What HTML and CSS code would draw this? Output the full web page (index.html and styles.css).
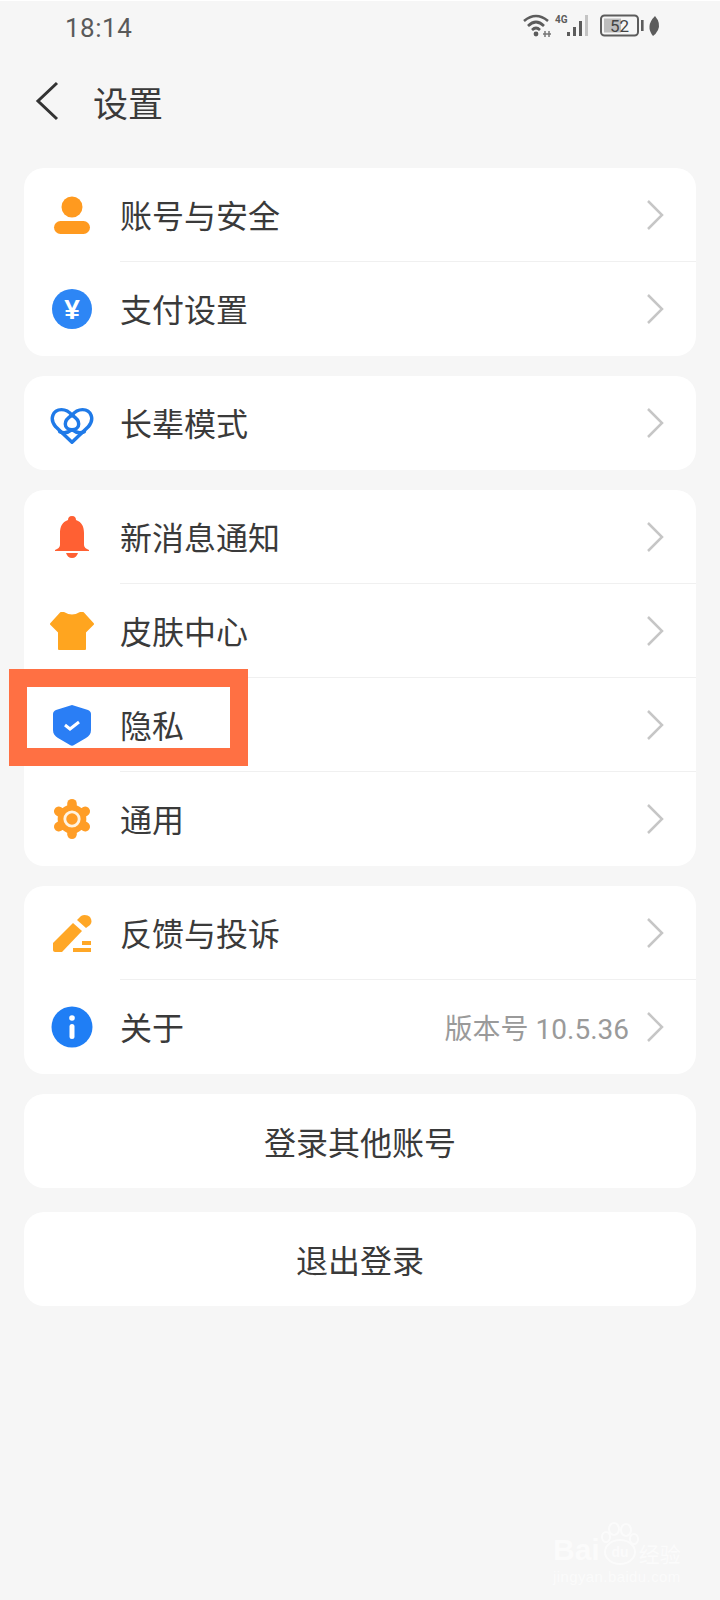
FILE: index.html
```html
<!DOCTYPE html>
<html lang="zh-CN">
  <head>
    <meta charset="UTF-8" />
    <meta name="viewport" content="width=device-width, initial-scale=1.0" />
    <title>设置</title>
    <link rel="stylesheet" href="styles.css">
  </head>
  <body>
    <!-- Status bar -->
    <div class="status-bar">
      <span class="status-time">18:14</span>
      <svg class="status-icons" width="138" height="26" viewBox="0 0 138 26">
        <g fill="none" stroke="#5c5c5c" stroke-width="2.6">
          <path d="M1 8 Q13 -2 25 8" />
          <path d="M5 13 Q13 5 21 13" />
          <path d="M9 17 Q13 13 17 17" />
        </g>
        <circle cx="13" cy="21" r="2.4" fill="#5c5c5c" />
        <path d="M20 21h8M22 18v6M26 18v6" stroke="#777" stroke-width="1.5" fill="none" />
        <text x="32" y="10" class="status-4g">4G</text>
        <rect x="44" y="19" width="3" height="4" fill="#5c5c5c" />
        <rect x="50" y="14" width="3" height="9" fill="#5c5c5c" />
        <rect x="56" y="8" width="3" height="15" fill="#5c5c5c" />
        <rect x="62" y="2" width="3" height="21" fill="#c4c4c4" />
        <rect x="78" y="2.5" width="37" height="20" rx="3.5" fill="none" stroke="#5c5c5c" stroke-width="2" />
        <rect x="81" y="5.5" width="17" height="14" fill="#bdbdbd" />
        <text x="96.5" y="19" text-anchor="middle" class="status-battery">52</text>
        <rect x="118" y="7" width="2.6" height="11" fill="#5c5c5c" />
        <path d="M132 3 Q138 10 135 17 Q133 21 130 23 Q122 13 132 3Z" fill="#5c5c5c" />
      </svg>
    </div>

    <!-- Header -->
    <div class="page-header">
      <svg class="back-icon" width="24" height="40" viewBox="0 0 24 40">
        <path d="M22 2 L3 20 L22 38" fill="none" stroke="#333" stroke-width="3" />
      </svg>
      <h1 class="page-title">设置</h1>
    </div>

    <div class="settings">
      <div class="card">
        <div class="row">
          <svg class="row-icon" width="44" height="44" viewBox="0 0 44 44">
            <circle cx="22" cy="14" r="10.5" fill="#ff9a1f" />
            <rect x="4" y="28" width="36" height="13" rx="6.5" fill="#ff9a1f" />
          </svg>
          <span class="row-label">账号与安全</span>
          <svg class="chevron" width="18" height="32" viewBox="0 0 18 32"><path d="M2 2 L16 16 L2 30" /></svg>
        </div>
        <div class="row row-split">
          <svg class="row-icon" width="44" height="44" viewBox="0 0 44 44">
            <circle cx="22" cy="22" r="20" fill="#2d86f5" />
            <text x="22" y="32" text-anchor="middle" class="yuan">¥</text>
          </svg>
          <span class="row-label">支付设置</span>
          <svg class="chevron" width="18" height="32" viewBox="0 0 18 32"><path d="M2 2 L16 16 L2 30" /></svg>
        </div>
      </div>

      <div class="card">
        <div class="row">
          <svg class="row-icon" width="44" height="44" viewBox="0 0 46 44">
            <g fill="none" stroke="#1f7ae8" stroke-width="3.6" stroke-linejoin="round" stroke-linecap="round">
              <path d="M23 42 L6 26 C-1 18 3 8 12 8 C17 8 20 10 23 14 C26 10 29 8 34 8 C43 8 47 18 40 26 Z" />
              <path d="M23 14 C28 17 30 20 30 23 C30 27 27 29 23 29 C19 29 16 27 16 23 C16 20 18 17 23 14 Z" />
              <path d="M10 31 C14 33 18 33 23 29 C28 33 32 33 36 31" />
            </g>
          </svg>
          <span class="row-label">长辈模式</span>
          <svg class="chevron" width="18" height="32" viewBox="0 0 18 32"><path d="M2 2 L16 16 L2 30" /></svg>
        </div>
      </div>

      <div class="card">
        <div class="row">
          <svg class="row-icon" width="44" height="44" viewBox="0 0 44 44">
            <path d="M22 1 C25 1 26 3 26 5 C32 7 34 12 34 18 L34 30 C34 32 36 34 39 35 L39 36 L5 36 L5 35 C8 34 10 32 10 30 L10 18 C10 12 12 7 18 5 C18 3 19 1 22 1 Z" fill="#ff6033" />
            <path d="M16 38 L28 38 C27 41 25 43 22 43 C19 43 17 41 16 38 Z" fill="#ff6033" />
          </svg>
          <span class="row-label">新消息通知</span>
          <svg class="chevron" width="18" height="32" viewBox="0 0 18 32"><path d="M2 2 L16 16 L2 30" /></svg>
        </div>
        <div class="row row-split">
          <svg class="row-icon" width="44" height="44" viewBox="0 0 44 44">
            <path d="M14 4 Q22 9 30 4 L33 4 L43 15 L35 23 L35 40 L9 40 L9 23 L1 15 L11 4 Z" fill="#ffa51f" stroke="#ffa51f" stroke-width="2" stroke-linejoin="round" />
          </svg>
          <span class="row-label">皮肤中心</span>
          <svg class="chevron" width="18" height="32" viewBox="0 0 18 32"><path d="M2 2 L16 16 L2 30" /></svg>
        </div>
        <div class="row row-split">
          <svg class="row-icon" width="44" height="44" viewBox="0 0 44 44">
            <path d="M22 2 L38 7 C40 8 41 9 41 11 L41 27 C41 31 39 33 36 35 L24 42 C23 43 21 43 20 42 L8 35 C5 33 3 31 3 27 L3 11 C3 9 4 8 6 7 Z" fill="#2a7ef5" />
            <path d="M15 22 L20 26 L29 19" fill="none" stroke="#fff" stroke-width="3" />
          </svg>
          <span class="row-label">隐私</span>
          <svg class="chevron" width="18" height="32" viewBox="0 0 18 32"><path d="M2 2 L16 16 L2 30" /></svg>
        </div>
        <div class="row row-split">
          <svg class="row-icon" width="44" height="44" viewBox="0 0 44 46">
            <g fill="#ff9d26">
              <circle cx="22" cy="23" r="15" />
              <rect x="17" y="2" width="10" height="42" rx="5" />
              <rect x="17" y="2" width="10" height="42" rx="5" transform="rotate(60 22 23)" />
              <rect x="17" y="2" width="10" height="42" rx="5" transform="rotate(120 22 23)" />
            </g>
            <circle cx="22" cy="23" r="7.5" fill="none" stroke="#fff3e0" stroke-width="3" />
          </svg>
          <span class="row-label">通用</span>
          <svg class="chevron" width="18" height="32" viewBox="0 0 18 32"><path d="M2 2 L16 16 L2 30" /></svg>
        </div>
      </div>

      <div class="card">
        <div class="row">
          <svg class="row-icon" width="44" height="44" viewBox="0 0 44 44">
            <path d="M3 32 L23 12 L32 20 L12 41 L5 41 C4 41 3 40 3 39 Z" fill="#ffa726" />
            <path d="M27 9 L31 5 C34 3 38 4 40 6 C42 9 42 12 40 14 L36 17 Z" fill="#ffa726" />
            <rect x="32" y="30" width="9" height="4" fill="#ffa726" />
            <rect x="23" y="37" width="18" height="4" fill="#ffa726" />
          </svg>
          <span class="row-label">反馈与投诉</span>
          <svg class="chevron" width="18" height="32" viewBox="0 0 18 32"><path d="M2 2 L16 16 L2 30" /></svg>
        </div>
        <div class="row row-split">
          <svg class="row-icon" width="44" height="44" viewBox="0 0 44 44">
            <circle cx="22" cy="22" r="20.5" fill="#1f7ef5" />
            <circle cx="22" cy="13" r="2.8" fill="#fff" />
            <rect x="19.5" y="19" width="5" height="15" rx="2.5" fill="#fff" />
          </svg>
          <span class="row-label">关于</span>
          <span class="row-value">版本号 10.5.36</span>
          <svg class="chevron" width="18" height="32" viewBox="0 0 18 32"><path d="M2 2 L16 16 L2 30" /></svg>
        </div>
      </div>

      <div class="card card-action">登录其他账号</div>
      <div class="card card-action card-logout">退出登录</div>
    </div>

    <!-- Annotation box drawn over the screenshot -->
    <div class="highlight-box"></div>

    <!-- Watermark -->
    <div class="watermark">
      <div class="watermark-logo">
        <span class="wm-bai">Bai</span>
        <svg class="wm-paw" width="38" height="44" viewBox="0 0 38 44">
          <g fill="none" stroke="#fff" stroke-width="2">
            <ellipse cx="13" cy="7" rx="5" ry="6" />
            <ellipse cx="25" cy="8" rx="5" ry="6" />
            <ellipse cx="5" cy="15" rx="4" ry="5" />
            <ellipse cx="33" cy="17" rx="4" ry="5" />
            <ellipse cx="19" cy="30" rx="15" ry="12" />
          </g>
          <text x="19" y="35" text-anchor="middle" class="wm-du">du</text>
        </svg>
        <span class="wm-cn">经验</span>
      </div>
      <div class="wm-url">jingyan.baidu.com</div>
    </div>
  </body>
</html>
```

FILE: styles.css
```css
body {
  font-family: "Noto Sans CJK SC", Roboto, sans-serif;
  margin: 0;
  width: 720px;
  height: 1600px;
  overflow: hidden;
  position: relative;
  background: #f6f6f6;
  color: #333;
}

.status-bar {
  display: flex;
  justify-content: space-between;
  align-items: center;
  height: 54px;
  box-sizing: border-box;
  border-top: 1px solid #fff;
  padding: 0 59px 0 65px;
}

.status-time {
  font-family: Roboto, sans-serif;
  font-size: 26px;
  letter-spacing: 0.5px;
  color: #5a5a5a;
}

.status-icons {
  margin-top: -3px;
}

.status-4g {
  font-family: Roboto, sans-serif;
  font-size: 10px;
  font-weight: 700;
  fill: #5c5c5c;
}

.status-battery {
  font-family: Roboto, sans-serif;
  font-size: 17px;
  fill: #444;
}

.page-header {
  display: flex;
  align-items: center;
  height: 96px;
  box-sizing: border-box;
  padding: 0 0 2px 35px;
}

.back-icon {
  flex: none;
}

.page-title {
  margin: 0 0 0 34px;
  font-size: 35px;
  font-weight: 400;
  color: #3a3a3a;
}

.settings {
  display: flex;
  flex-direction: column;
  gap: 20px;
  margin: 18px 24px 0;
}

.card {
  background: white;
  border-radius: 20px;
  overflow: hidden;
}

.row {
  display: flex;
  align-items: center;
  height: 94px;
  padding: 0 32px 0 26px;
  box-sizing: border-box;
  position: relative;
}

.row-split::before {
  content: "";
  position: absolute;
  top: -1px;
  left: 96px;
  right: 0;
  height: 1px;
  background: #f0f0f0;
}

.row-icon {
  flex: none;
  margin-right: 26px;
}

.row-label {
  flex: 1;
  font-size: 32px;
  line-height: 1;
  padding-bottom: 2px;
  color: #3a3a3a;
}

.row-value {
  font-family: Roboto, "Noto Sans CJK SC", sans-serif;
  font-size: 28px;
  color: #9a9a9a;
  margin-right: 17px;
}

.chevron {
  flex: none;
}

.chevron path {
  fill: none;
  stroke: #c6c6c6;
  stroke-width: 2.5;
}

.yuan {
  font-family: "Liberation Sans", sans-serif;
  font-size: 28px;
  font-weight: 700;
  fill: white;
}

.card-action {
  height: 94px;
  display: flex;
  align-items: center;
  justify-content: center;
  font-size: 32px;
  color: #3a3a3a;
}

.card-logout {
  margin-top: 4px;
}

.highlight-box {
  position: absolute;
  left: 9px;
  top: 669px;
  width: 239px;
  height: 97px;
  box-sizing: border-box;
  border: solid #ff7043;
  border-width: 18px;
}

.watermark {
  position: absolute;
  left: 553px;
  top: 1522px;
  width: 140px;
  color: white;
  opacity: 0.6;
}

.watermark-logo {
  display: flex;
  align-items: flex-end;
}

.wm-bai {
  font-family: "Liberation Sans", sans-serif;
  font-size: 30px;
  font-weight: 700;
  line-height: 32px;
  margin-right: 1px;
}

.wm-paw {
  flex: none;
}

.wm-du {
  font-family: "Liberation Sans", sans-serif;
  font-size: 14px;
  font-weight: 700;
  fill: white;
}

.wm-cn {
  font-size: 21px;
  line-height: 26px;
}

.wm-url {
  font-family: "Liberation Sans", sans-serif;
  font-size: 15px;
  line-height: 18px;
  letter-spacing: 0.4px;
  margin-top: 2px;
}
```
